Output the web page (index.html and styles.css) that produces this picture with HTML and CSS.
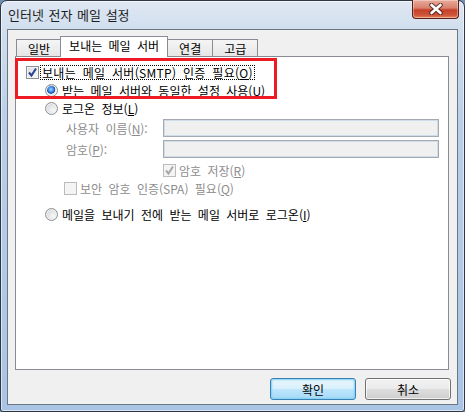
FILE: index.html
```html
<!DOCTYPE html>
<html lang="ko">
<head>
  <meta charset="UTF-8" />
  <title>인터넷 전자 메일 설정</title>
  <link rel="stylesheet" href="styles.css">
</head>
<body>
  <div class="window">
    <div class="titlebar">
      <span class="title">인터넷 전자 메일 설정</span>
      <button class="close-btn" aria-label="닫기">
        <svg width="16" height="12" viewBox="0 0 16 12">
          <path d="M3.5 2 L12.5 10 M12.5 2 L3.5 10" stroke="#3a1a14" stroke-width="4.6" stroke-linecap="round" opacity="0.75"/>
          <path d="M3.5 2 L12.5 10 M12.5 2 L3.5 10" stroke="#ffffff" stroke-width="2.6" stroke-linecap="round"/>
        </svg>
      </button>
    </div>

    <div class="client">
      <div class="tabs">
        <div class="tab">일반</div>
        <div class="tab active">보내는 메일 서버</div>
        <div class="tab">연결</div>
        <div class="tab">고급</div>
      </div>

      <div class="panel">
        <!-- red annotation box over the first two options -->
        <div class="highlight"></div>

        <div class="opt">
          <span class="check checked">
            <svg width="11" height="11" viewBox="0 0 11 11"><path d="M2 5.5 L4.5 8.5 L9 1.5" fill="none" stroke="#2a3f8f" stroke-width="2"/></svg>
          </span>
          <span class="label focus">보내는 메일 서버(SMTP) 인증 필요(<u>O</u>)</span>
        </div>

        <div class="opt indent-1">
          <span class="radio selected"></span>
          <span class="label">받는 메일 서버와 동일한 설정 사용(<u>U</u>)</span>
        </div>

        <div class="opt indent-1 logon">
          <span class="radio"></span>
          <span class="label">로그온 정보(<u>L</u>)</span>
        </div>

        <div class="field">
          <span class="field-label">사용자 이름(<u>N</u>):</span>
          <input class="text-input" type="text" disabled />
        </div>

        <div class="field">
          <span class="field-label">암호(<u>P</u>):</span>
          <input class="text-input" type="password" disabled />
        </div>

        <div class="opt disabled save-pwd">
          <span class="check checked off">
            <svg width="11" height="11" viewBox="0 0 11 11"><path d="M2 5.5 L4.5 8.5 L9 1.5" fill="none" stroke="#a8a8a8" stroke-width="2"/></svg>
          </span>
          <span class="label">암호 저장(<u>R</u>)</span>
        </div>

        <div class="opt disabled spa">
          <span class="check off"></span>
          <span class="label">보안 암호 인증(SPA) 필요(<u>Q</u>)</span>
        </div>

        <div class="opt indent-1 before-send">
          <span class="radio"></span>
          <span class="label">메일을 보내기 전에 받는 메일 서버로 로그온(<u>I</u>)</span>
        </div>
      </div>

      <div class="actions">
        <button class="btn default">확인</button>
        <button class="btn">취소</button>
      </div>
    </div>
  </div>
</body>
</html>
```

FILE: styles.css
```css
* {
  box-sizing: border-box;
  margin: 0;
  padding: 0;
}
body {
  width: 465px;
  height: 412px;
  overflow: hidden;
  font-family: "Noto Sans CJK KR", "Noto Sans", sans-serif;
  font-size: 12px;
  color: #000;
  background: #6d8fb5;
}
.window {
  width: 465px;
  height: 412px;
  display: flex;
  flex-direction: column;
  border: 1px solid #2e3744;
  border-radius: 7px 7px 3px 3px;
  background: linear-gradient(180deg, #dfe8f3 0%, #cfdded 8%, #b9cfe8 30%, #a9c4e4 100%);
  box-shadow: inset 0 0 0 1px rgba(255,255,255,0.55);
}
.titlebar {
  height: 28px;
  display: flex;
  align-items: flex-start;
  justify-content: space-between;
}
.title {
  padding: 7px 0 0 7px;
  line-height: 14px;
  font-size: 13px;
  word-spacing: 1px;
  color: #1e1e1e;
}
.close-btn {
  width: 47px;
  height: 19px;
  margin: -1px 5px 0 0;
  border: 1px solid #5a2018;
  border-top: none;
  border-radius: 0 0 4px 4px;
  background: linear-gradient(180deg, #e9ab9b 0%, #d9806c 45%, #c5402a 55%, #d0563a 85%, #e48a60 100%);
  box-shadow: inset 0 0 0 1px rgba(255,255,255,0.35);
  display: flex;
  align-items: center;
  justify-content: center;
}
.close-btn svg {
  display: block;
}
.client {
  flex: 1;
  margin: 0 6px 6px;
  border: 1px solid #6b7785;
  background: #f0f0f0;
  padding: 6px 8px 0 7px;
  display: flex;
  flex-direction: column;
}
.tabs {
  display: flex;
  align-items: flex-end;
  height: 21px;
  margin-bottom: -1px;
  padding-left: 1px;
  position: relative;
  z-index: 1;
}
.tab {
  height: 17px;
  margin-bottom: 1px;
  margin-right: -1px;
  padding: 0 11px;
  border: 1px solid #898c95;
  border-bottom: none;
  background: linear-gradient(180deg, #f5f5f5, #e6e6e6);
  line-height: 17px;
  word-spacing: 3px;
}
.tab.active {
  height: 21px;
  margin: 0 -1px 0 -1px;
  padding: 0 8px;
  background: #fff;
  line-height: 17px;
}
.panel {
  flex: 1;
  position: relative;
  border: 1px solid #898c95;
  background: #fff;
  padding: 6px 0 0 10px;
}
.highlight {
  position: absolute;
  left: -1px;
  top: 1px;
  width: 262px;
  height: 41px;
  border: 3px solid #ed1c24;
}
.opt {
  display: flex;
  align-items: center;
  height: 18px;
  gap: 3px;
}
.label {
  line-height: 13px;
  word-spacing: 3px;
  white-space: nowrap;
}
.label.focus {
  outline: 1px dotted #000;
  outline-offset: 0;
  padding: 0 1px;
  margin-left: -1px;
  letter-spacing: 0.3px;
}
.indent-1 {
  margin-left: 19px;
}
.logon {
  height: 19px;
}
.disabled .label,
.field-label {
  color: #8d8d8d;
}
.check {
  width: 13px;
  height: 13px;
  flex: none;
  border: 1px solid #8e8f8f;
  background: linear-gradient(135deg, #d6d9de 0%, #eef0f2 60%, #fafafa 100%);
  box-shadow: inset 0 0 0 1px #f4f4f4;
  display: flex;
  align-items: center;
  justify-content: center;
}
.check.off {
  border-color: #bcbcbc;
  background: #f4f4f4;
  box-shadow: none;
}
.check svg {
  display: block;
}
.radio {
  width: 13px;
  height: 13px;
  flex: none;
  border-radius: 50%;
  border: 1px solid #8e8f8f;
  background: radial-gradient(circle at 65% 65%, #f7f7f7 0%, #dfe1e4 55%, #c9ccd1 100%);
  box-shadow: inset 0 0 0 1px #f2f2f2;
}
.radio.selected {
  background: radial-gradient(circle at 45% 40%, #a9d8ff 0%, #3a86e6 30%, #1b4fb0 45%, #e6e8ea 52%, #f7f7f7 100%);
}
.indent-1 .label {
  margin-left: 1px;
}
.field {
  display: flex;
  align-items: center;
  height: 18px;
  margin: 1px 0 3px 40px;
}
.field-label {
  width: 97px;
  line-height: 13px;
  word-spacing: 3px;
}
.text-input {
  width: 276px;
  height: 18px;
  border: 1px solid #a5a9b1;
  box-shadow: inset 0 0 0 1px #cfdcea;
  background: #f0f0f0;
  font: inherit;
}
.save-pwd {
  margin-left: 137px;
}
.spa {
  margin-left: 38px;
}
.before-send {
  margin-top: 8px;
}
.actions {
  height: 34px;
  display: flex;
  justify-content: flex-end;
  gap: 9px;
  padding-top: 8px;
  margin-right: -2px;
}
.btn {
  width: 86px;
  height: 22px;
  border: 1px solid #707070;
  border-radius: 3px;
  background: linear-gradient(180deg, #f2f2f2 0%, #ebebeb 48%, #dddddd 52%, #cfcfcf 100%);
  box-shadow: inset 0 0 0 1px rgba(255,255,255,0.7);
  font: inherit;
  color: #000;
  word-spacing: 3px;
}
.btn.default {
  border-color: #3c7fb1;
  background: linear-gradient(180deg, #eaf6fd 0%, #d9f0fc 48%, #bee6fd 52%, #a7d9f5 100%);
  box-shadow: inset 0 0 0 1px #48d9fe33, inset 0 0 2px 1px #8ed3f7;
}
```
